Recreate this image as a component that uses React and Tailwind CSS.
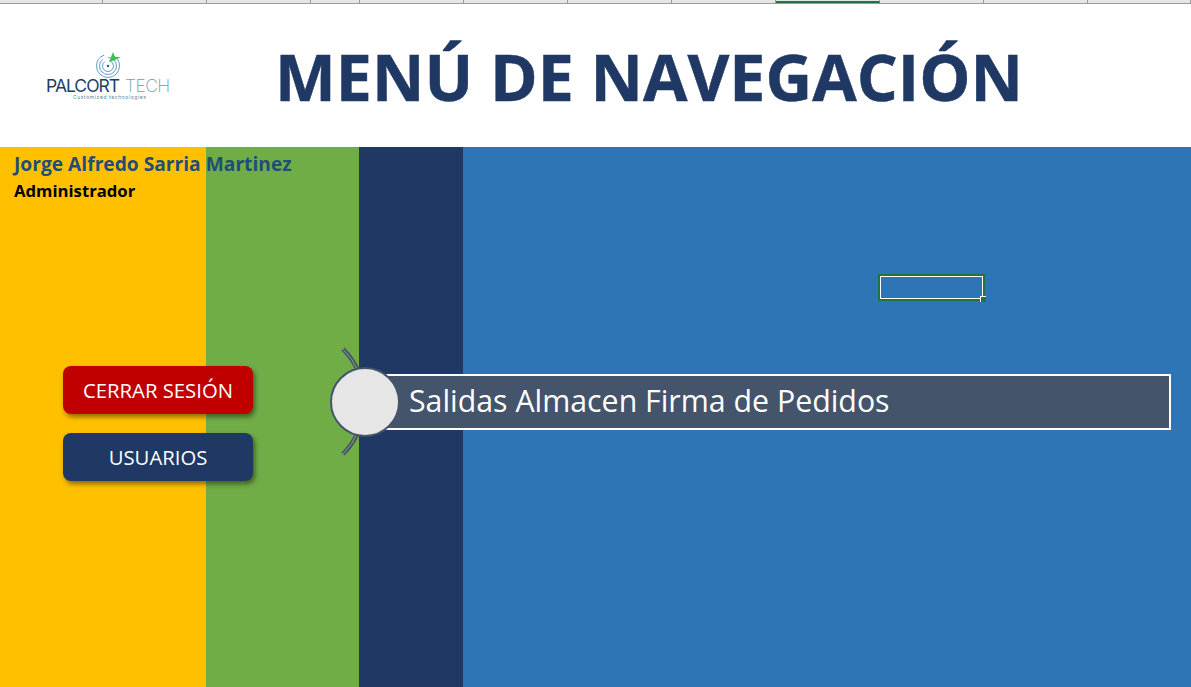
import React from 'react';

const colWidths = [103, 104, 104, 49, 104, 104, 104, 104, 104, 104, 104, 103];

const ColumnStrip = () => (
  <div className="flex h-[4px] bg-[#e6e6e6] border-b border-[#9b9b9b]">
    {colWidths.map((w, i) => (
      <div
        key={i}
        style={{ width: w }}
        className={i === 8 ? 'h-[3px] border-b-2 border-[#217346] border-r border-r-[#9b9b9b]' : 'h-[3px] border-r border-[#9b9b9b]'}
      />
    ))}
  </div>
);

const Logo = () => (
  <div className="relative w-[126px] h-[50px]">
    <svg className="absolute left-[48px] top-[-1px] w-[30px] h-[28px]" viewBox="0 0 30 28" fill="none">
      <circle cx="14" cy="15" r="11.5" stroke="#5f9fc4" strokeWidth="1" strokeDasharray="50 8" />
      <circle cx="14" cy="15" r="8.5" stroke="#5f9fc4" strokeWidth="1" strokeDasharray="34 6" />
      <circle cx="14" cy="15" r="5.5" stroke="#5f9fc4" strokeWidth="1" strokeDasharray="22 5" />
      <circle cx="14" cy="15" r="1.2" fill="#1f5f86" />
      <path d="M15 11L19 1L21 6L27 6L21 9Z" fill="#3cc24a" />
    </svg>
    <div className="absolute left-0 top-[25px] flex whitespace-nowrap font-['Inter',sans-serif] text-[17.5px] leading-[17px]">
      <span className="text-[#1c3f66] font-normal tracking-[-1px]">PALCORT</span>
      <span className="text-[#6f9db8] font-extralight ml-[6px] tracking-[-0.6px]">TECH</span>
    </div>
    <div className="absolute left-[27px] top-[42px] whitespace-nowrap font-['Inter',sans-serif] text-[5px] leading-[6px] tracking-[0.6px] text-[#5d7f95]">
      Customized technologies
    </div>
  </div>
);

const SideButton = ({ label, color }) => (
  <button className={`w-[190px] h-[48px] pt-[1px] rounded-[8px] text-white text-[20.3px] shadow-[2px_3px_5px_rgba(0,0,0,0.45)] ${color}`}>
    {label}
  </button>
);

export default function App() {
  return (
    <div className="w-[1191px] h-[687px] overflow-hidden flex flex-col bg-white font-['Open_Sans',sans-serif]">
      <ColumnStrip />

      <header className="h-[143px] flex items-center">
        <div className="w-[275px] pl-[46px] pt-[2px]">
          <Logo />
        </div>
        <h1 className="text-[64.5px] font-bold leading-none text-[#1f3864] whitespace-nowrap pt-[2px] [-webkit-text-stroke:0.5px_#1f3864]">
          MENÚ DE NAVEGACIÓN
        </h1>
      </header>

      <main className="relative flex-1 flex">
        <div className="w-[206px] bg-[#ffc000]" />
        <div className="w-[153px] bg-[#70ad47]" />
        <div className="w-[104px] bg-[#1f3864]" />
        <div className="flex-1 bg-[#2e75b6]" />

        <div className="absolute left-[14px] top-[4px] whitespace-nowrap">
          <p className="text-[19.2px] leading-[26px] font-bold text-[#1f4e79]">Jorge Alfredo Sarria Martinez</p>
          <p className="text-[16.7px] leading-[24px] font-bold text-black mt-[2px]">Administrador</p>
        </div>

        <div className="absolute left-[63px] top-[219px] flex flex-col gap-[19px]">
          <SideButton label="CERRAR SESIÓN" color="bg-[#c00000]" />
          <SideButton label="USUARIOS" color="bg-[#1f3864]" />
        </div>

        <div className="absolute left-[379px] top-[227px] w-[792px] h-[56px] flex items-center pl-[28px] pb-[2px] bg-[#44546a] border-2 border-white text-white text-[30.3px] whitespace-nowrap">
          Salidas Almacen Firma de Pedidos
        </div>

        <svg className="absolute left-[336px] top-[200px] w-[30px] h-[110px]" viewBox="0 0 30 110" fill="none">
          <path d="M7 2Q17 12 22 24" stroke="#44546a" strokeWidth="4.5" />
          <path d="M7 2Q17 12 22 24" stroke="#8ba583" strokeWidth="1" />
          <path d="M7 107Q17 97 22 85" stroke="#44546a" strokeWidth="4.5" />
          <path d="M7 107Q17 97 22 85" stroke="#8ba583" strokeWidth="1" />
        </svg>

        <div className="absolute left-[330px] top-[220px] w-[70px] h-[70px] rounded-full bg-[#e7e6e6] border-2 border-[#44546a]" />

        <div className="absolute left-[878px] top-[127px] w-[107px] h-[27px] border-2 border-[#217346]">
          <div className="w-full h-full border border-white" />
          <div className="absolute right-[-3px] bottom-[-3px] w-[6px] h-[6px] bg-[#217346] border-l border-t border-white" />
        </div>
      </main>
    </div>
  );
}
